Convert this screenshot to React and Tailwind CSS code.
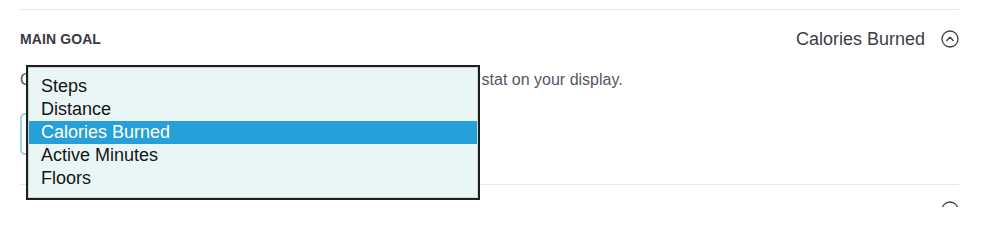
import React, { useState } from 'react';

const goals = ['Steps', 'Distance', 'Calories Burned', 'Active Minutes', 'Floors'];

function ChevronCircle() {
    return (
        <svg width="18" height="18" viewBox="0 0 18 18" className="text-[#3d3d47]">
            <circle cx="9" cy="9" r="8" fill="none" stroke="currentColor" strokeWidth="1.3" />
            <path d="M5.8 10.4 L9 7.2 L12.2 10.4" fill="none" stroke="currentColor" strokeWidth="1.4" strokeLinecap="round" strokeLinejoin="round" />
        </svg>
    );
}

export default function App() {
    const [goal, setGoal] = useState('Calories Burned');

    return (
        <div className="relative w-[999px] h-[207px] overflow-hidden bg-white pt-[9px] pl-[20px] pr-[40px]" style={{ fontFamily: '"Liberation Sans", Arial, sans-serif' }}>
            <section className="border-t border-[#e6e6ec]">
                <div className="h-[58px] flex items-center justify-between">
                    <h2 className="text-[14px] font-bold tracking-[0.1px] text-[#3a3a44] uppercase">Main Goal</h2>
                    <div className="flex items-center gap-[16px]">
                        <span className="text-[18px] text-[#3d3d47]">{goal}</span>
                        <ChevronCircle />
                    </div>
                </div>
                <p className="mt-[1px] text-[16px] leading-[22px] text-[#56565f] whitespace-nowrap">
                    Choose the goal you want to track. Your progress toward it is the stat on your display.
                </p>
                <div className="mt-[22px] h-[42px] w-[320px] rounded-[5px] border-2 border-[#9ad8d0] bg-white" />
                <div className="h-[29px]" />
            </section>
            <section className="border-t border-[#e6e6ec]">
                <div className="h-[50px] flex items-center justify-end">
                    <ChevronCircle />
                </div>
            </section>

            <div className="absolute left-[26px] top-[65px] w-[454px] h-[135px] border-2 border-[#1e1e1e] bg-[#eaf6f6]">
                <ul className="h-full border border-[#cfd6d6] pt-[7px]">
                    {goals.map(g => (
                        <li
                            key={g}
                            onClick={() => setGoal(g)}
                            className={`h-[23px] pl-[12px] text-[18px] leading-[23px] cursor-default ${g === goal ? 'bg-[#279fd9] text-white' : 'text-[#151515]'}`}
                        >
                            {g}
                        </li>
                    ))}
                </ul>
            </div>
        </div>
    );
}
